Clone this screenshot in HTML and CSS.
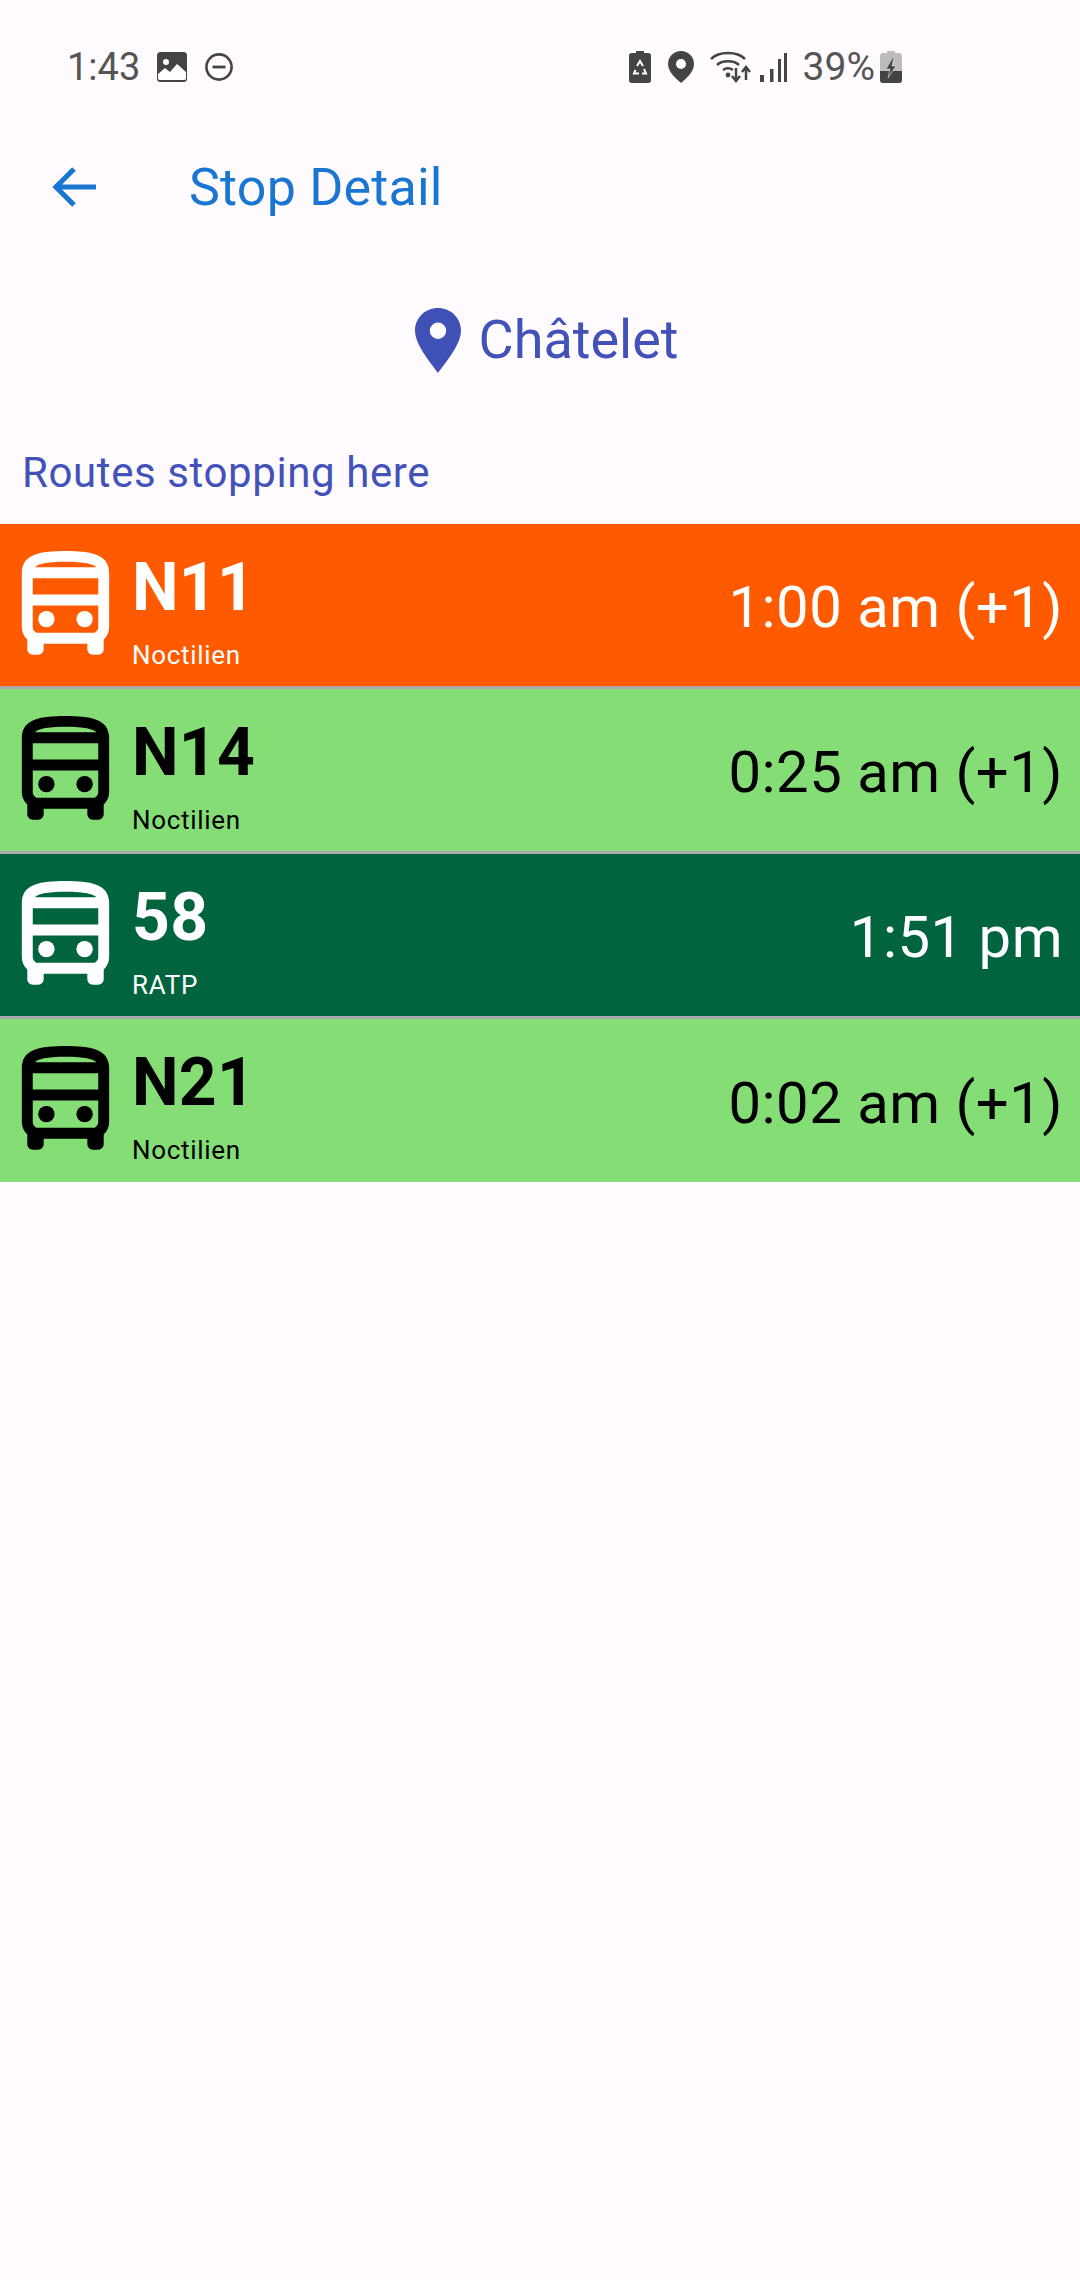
FILE: index.html
```html
<!DOCTYPE html>
<html lang="en">
<head>
<meta charset="utf-8">
<title>Stop Detail</title>
<link rel="stylesheet" href="styles.css">
</head>
<body>
<svg class="defs" width="0" height="0" aria-hidden="true">
  <symbol id="bus" viewBox="0 0 24 24">
    <path d="M12 2c-4.42 0-8 .5-8 4v10c0 .88.39 1.67 1 2.22V20c0 .55.45 1 1 1h1c.55 0 1-.45 1-1v-1h8v1c0 .55.45 1 1 1h1c.55 0 1-.45 1-1v-1.78c.61-.55 1-1.34 1-2.22V6c0-3.5-3.58-4-8-4zm5.660 2.990H6.430C6.980 4.460 8.380 4 12 4s5.020.460 5.660.990zM18 6.990V10H6V6.990h12zm-.340 9.740l-.290.270H6.630l-.290-.270C6.210 16.620 6 16.370 6 16v-4h12v4c0 .370-.210.620-.340.730z"/>
    <circle cx="8.500" cy="14.500" r="1.500"/>
    <circle cx="15.500" cy="14.500" r="1.500"/>
  </symbol>
</svg>
<main class="screen">
  <header class="status">
    <div class="status-left">
      <span class="clock">1:43</span>
      <svg class="ic-image" viewBox="0 0 30 30"><rect width="30" height="30" rx="3.500" fill="#444"/><circle cx="9" cy="10" r="3" fill="#fff"/><path d="M1 27v-5l7-6 5 4 7-8 9 8v7a2 2 0 0 1-2 1H3a2 2 0 0 1-2-1z" fill="#fff"/></svg>
      <svg class="ic-dnd" viewBox="0 0 30 30"><circle cx="15" cy="15" r="12.600" fill="none" stroke="#444" stroke-width="2.600"/><path d="M8.500 15h13" stroke="#444" stroke-width="2.800"/></svg>
    </div>
    <div class="status-right">
      <svg class="ic-saver" viewBox="0 0 22 32"><path d="M7 0h8v2h4a3 3 0 0 1 3 3v24a3 3 0 0 1-3 3H3a3 3 0 0 1-3-3V5a3 3 0 0 1 3-3h4z" fill="#444"/><path d="M8 15l3-5 3 5M6.500 19L5 22.500h5M13 22.500h4L15 18" fill="none" stroke="#fff" stroke-width="2"/></svg>
      <svg class="ic-pin" viewBox="0 0 26 32"><path d="M13 0a13 13 0 0 1 13 13c0 7-6 13-13 19C6 26 0 20 0 13A13 13 0 0 1 13 0z" fill="#444"/><circle cx="13" cy="13" r="5" fill="#fff"/></svg>
      <svg class="ic-wifi" viewBox="0 0 42 32"><g fill="none" stroke="#444" stroke-width="2.500"><path d="M1 8C9 0 27 0 35 8"/><path d="M7 14c5-5 17-5 22 0"/><path d="M13 19c3-2 7-2 10 0"/><path d="M26 17v12M22 25l4 5 4-5M36 29V17M32 21l4-5 4 5"/></g><circle cx="18" cy="24" r="2.400" fill="#444"/></svg>
      <svg class="ic-signal" viewBox="0 0 28 30"><g fill="#444"><rect x="0" y="23" width="4" height="7"/><rect x="10" y="17" width="3.500" height="13"/><rect x="18" y="7" width="3" height="23"/><rect x="24" y="1" width="3" height="29"/></g></svg>
      <span class="pct">39%</span>
      <svg class="ic-batt" viewBox="0 0 22 32"><path d="M7 0h8v2h4a3 3 0 0 1 3 3v24a3 3 0 0 1-3 3H3a3 3 0 0 1-3-3V5a3 3 0 0 1 3-3h4z" fill="#bdbbbd"/><path d="M0 20h22v9a3 3 0 0 1-3 3H3a3 3 0 0 1-3-3z" fill="#444"/><path d="M13 6L6 18h4l-2 9 8-12h-4l2-9z" fill="#444" stroke="#e8e6e8" stroke-width=".600"/></svg>
    </div>
  </header>

  <nav class="appbar">
    <svg class="back" viewBox="0 0 44 40"><path d="M44 20H5M22 2L4 20l18 18" fill="none" stroke="#1976d2" stroke-width="5.200"/></svg>
    <h1 class="appbar-title">Stop Detail</h1>
  </nav>

  <section class="stop">
    <svg class="stop-pin" viewBox="0 0 46 66"><path fill-rule="evenodd" d="M23 0c12.700 0 23 10 23 22.500C46 37 30 55 23 65 16 55 0 37 0 22.500 0 10 10.300 0 23 0zm0 14.500a8.200 8.200 0 1 0 0 16.400 8.200 8.200 0 0 0 0-16.400z" fill="#3f51b5"/></svg>
    <h2 class="stop-name">Châtelet</h2>
  </section>

  <h3 class="section-label">Routes stopping here</h3>

  <ul class="routes">
    <li class="route orange">
      <svg class="bus"><use href="#bus"/></svg>
      <div class="route-info"><span class="route-num">N11</span><span class="route-op">Noctilien</span></div>
      <span class="route-time">1:00 am (+1)</span>
    </li>
    <li class="route green">
      <svg class="bus"><use href="#bus"/></svg>
      <div class="route-info"><span class="route-num">N14</span><span class="route-op">Noctilien</span></div>
      <span class="route-time">0:25 am (+1)</span>
    </li>
    <li class="route dark">
      <svg class="bus"><use href="#bus"/></svg>
      <div class="route-info"><span class="route-num">58</span><span class="route-op">RATP</span></div>
      <span class="route-time">1:51 pm</span>
    </li>
    <li class="route green">
      <svg class="bus"><use href="#bus"/></svg>
      <div class="route-info"><span class="route-num">N21</span><span class="route-op">Noctilien</span></div>
      <span class="route-time">0:02 am (+1)</span>
    </li>
  </ul>
</main>
</body>
</html>
```
FILE: styles.css
```css
* { box-sizing: border-box; margin: 0; padding: 0; }
html, body { height: 100%; }
body { background: #fffbfe; font-family: Roboto, "Noto Sans", sans-serif; overflow: hidden; }
.defs { display: block; height: 0; }
.screen { display: flex; flex-direction: column; height: 2280px; }

.status { height: 134px; display: flex; align-items: center; padding: 0 178px 0 67px; justify-content: space-between; color: #555; }
.status-left, .status-right { display: flex; align-items: center; }
.clock { font-size: 38px; width: 90px; }
.ic-image { width: 30px; height: 30px; }
.ic-dnd { width: 30px; height: 30px; margin-left: 17px; }
.ic-saver { width: 22px; height: 32px; margin-right: 17px; }
.ic-pin { width: 26px; height: 32px; margin-right: 16px; }
.ic-wifi { width: 42px; height: 32px; margin-right: 8px; }
.ic-signal { width: 28px; height: 30px; margin-right: 15px; }
.pct { font-size: 39px; margin-right: 5px; }
.ic-batt { width: 22px; height: 32px; }

.appbar { height: 106px; display: flex; align-items: center; padding-left: 52px; }
.back { width: 44px; height: 40px; }
.appbar-title { font-size: 52px; font-weight: 400; letter-spacing: .2px; color: #1976d2; margin-left: 93px; }

.stop { height: 128px; margin-top: 36px; padding-left: 13px; display: flex; align-items: center; justify-content: center; gap: 18px; }
.stop-pin { width: 46px; height: 66px; margin-top: 2px; }
.stop-name { font-size: 54px; font-weight: 400; color: #4352b8; margin-top: -1px; }

.section-label { height: 120px; display: flex; align-items: center; padding-left: 22px; font-size: 42px; font-weight: 400; color: #4352b8; margin-top: 8px; margin-bottom: -8px; letter-spacing: .6px; }

.routes { list-style: none; }
.route { height: 165px; display: flex; align-items: center; padding-right: 17px; border-bottom: 3px solid #a9a9a9; }
.route:last-child { border-bottom: 0; height: 163px; }
.orange { background: #ff5a00; color: #fff; fill: #fff; }
.green { background: #85dd75; color: #000; fill: #000; }
.dark { background: #00643f; color: #fff; fill: #fff; }
.bus { width: 131px; height: 131px; flex: none; }
.route-info { display: flex; flex-direction: column; margin-left: 1px; flex: 1; padding-top: 12px; }
.route-num { font-size: 66px; font-weight: 700; line-height: 76px; letter-spacing: .3px; }
.route-op { font-size: 26px; line-height: 36px; letter-spacing: .7px; margin-top: 11px; }
.route-time { font-size: 58px; letter-spacing: .5px; margin-top: 4px; }
```
